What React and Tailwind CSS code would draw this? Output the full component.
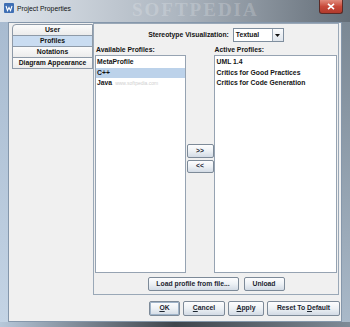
import React from 'react';

const tabs = ['User', 'Profiles', 'Notations', 'Diagram Appearance'];
const available = ['MetaProfile', 'C++', 'Java'];
const active = ['UML 1.4', 'Critics for Good Practices', 'Critics for Code Generation'];

// java "windows" look button
function Btn({ children, className = '' }) {
    return (
        <div
            className={`flex items-center justify-center rounded-[2px] border border-[#7d8a98] bg-linear-to-b from-[#fdfdfe] via-[#edf1f5] to-[#d3dbe5] text-[6.8px] font-bold leading-none text-[#1c2530] ${className}`}
        >
            {children}
        </div>
    );
}

export default function App() {
    return (
        <div className="relative flex h-[327px] w-[350px] flex-col overflow-hidden bg-[#b9cadc] font-['Liberation_Sans',Arial,sans-serif] text-[#141414]">
            {/* title bar */}
            <div className="relative flex h-[22px] items-start bg-linear-to-r from-[#dfe5ec] via-[#aeb7c1] to-[#646e78]">
                <div className="ml-[4px] mt-[3px] flex h-[10px] w-[10px] items-center justify-center rounded-[1px] bg-[#3f6fb4]">
                    <svg width="8" height="8" viewBox="0 0 8 8">
                        <path d="M1 2 L2.5 6.5 L4 3.5 L5.5 6.5 L7 2" fill="none" stroke="#fff" strokeWidth="1.1" />
                    </svg>
                </div>
                <span className="ml-[3px] mt-[4px] text-[6.8px] leading-[9px] text-[#101010]">Project Properties</span>
                <span className="pointer-events-none absolute left-[132px] top-0 font-['Liberation_Serif',serif] text-[19px] font-bold leading-[19px] tracking-[2px] text-white/20">
                    SOFTPEDIA
                </span>
                <div className="ml-auto mr-[7px] flex h-[14px] w-[24px] items-center justify-center rounded-b-[3px] border border-t-0 border-[#5a2a26] bg-linear-to-b from-[#e08a7c] via-[#c8493a] to-[#b13a2c]">
                    <svg width="8" height="7" viewBox="0 0 8 7">
                        <path d="M1 0.8 L7 6.2 M7 0.8 L1 6.2" stroke="#fff" strokeWidth="1.6" />
                    </svg>
                </div>
            </div>

            <div className="flex flex-1">
                <div className="w-[8px] bg-linear-to-b from-[#a8bbd0] to-[#c4d4e5]" />

                {/* client area */}
                <div className="flex w-[334px] flex-col border border-[#8597ab] bg-[#f0f0f0]">
                    <div className="flex h-[272px]">
                        {/* tabs */}
                        <div className="ml-[3px] mt-[2px] flex w-[81px] flex-col">
                            {tabs.map((t, i) => (
                                <div
                                    key={t}
                                    className={`-mt-px flex h-[12px] items-center justify-center border border-[#8e9aa8] text-[6.8px] font-bold leading-none ${
                                        i === 0 ? 'rounded-tl-[4px]' : ''
                                    } ${i === 1 ? 'bg-[#c9dcf1]' : 'bg-linear-to-b from-[#fbfbfb] to-[#ececec]'}`}
                                >
                                    {t}
                                </div>
                            ))}
                        </div>

                        {/* tab panel */}
                        <div className="flex w-[246px] flex-col border border-[#9aa8b7] px-px pb-[3px]">
                            <div className="mt-[4px] flex h-[14px] items-center justify-center gap-[4px]">
                                <span className="text-[6.8px] font-bold">Stereotype Visualization:</span>
                                <div className="flex h-[14px] w-[51px] border border-[#7f8e9e] bg-white">
                                    <span className="flex flex-1 items-center pl-[2px] text-[6.8px] font-bold">Textual</span>
                                    <div className="flex w-[11px] items-center justify-center border-l border-[#9aa6b3] bg-linear-to-b from-[#fafbfc] to-[#dfe5ec]">
                                        <svg width="5" height="3" viewBox="0 0 5 3">
                                            <path d="M0 0 H5 L2.5 3 Z" fill="#111" />
                                        </svg>
                                    </div>
                                </div>
                            </div>

                            <div className="mt-[2px] flex flex-1">
                                <div className="flex w-[91px] flex-col">
                                    <div className="h-[11px] pl-px text-[6.8px] font-bold leading-[11px]">Available Profiles:</div>
                                    <div className="flex-1 border border-[#96a3b2] bg-white pt-px">
                                        {available.map((p, i) => (
                                            <div
                                                key={p}
                                                className={`flex h-[10.5px] items-center gap-[3px] pl-[1px] text-[6.8px] font-bold leading-[10.5px] ${
                                                    i === 1 ? 'bg-[#bcd2ea]' : ''
                                                }`}
                                            >
                                                {p}
                                                {p === 'Java' && (
                                                    <span className="text-[5px] font-normal text-[#cfcfcf]">www.softpedia.com</span>
                                                )}
                                            </div>
                                        ))}
                                    </div>
                                </div>

                                <div className="flex w-[28px] flex-col items-center justify-center gap-[2px] pl-px">
                                    <Btn className="h-[14px] w-[27px]">&gt;&gt;</Btn>
                                    <Btn className="h-[13px] w-[27px]">&lt;&lt;</Btn>
                                </div>

                                <div className="flex w-[124px] flex-col">
                                    <div className="h-[11px] pl-px text-[6.8px] font-bold leading-[11px]">Active Profiles:</div>
                                    <div className="flex-1 border border-[#96a3b2] bg-white pt-px">
                                        {active.map((p) => (
                                            <div key={p} className="h-[10.5px] pl-[2px] text-[6.8px] font-bold leading-[10.5px]">
                                                {p}
                                            </div>
                                        ))}
                                    </div>
                                </div>
                            </div>

                            <div className="mt-[4px] flex justify-center gap-[5px]">
                                <Btn className="h-[14px] w-[91px]">Load profile from file...</Btn>
                                <Btn className="h-[14px] w-[41px]">Unload</Btn>
                            </div>
                        </div>
                    </div>

                    {/* dialog buttons */}
                    <div className="mt-[6px] flex justify-end gap-[3px] pr-px">
                        <Btn className="h-[15px] w-[31px] border-[#4a5562] shadow-[inset_0_0_0_1px_#9fb3c8]">
                            <span className="underline decoration-[0.5px] underline-offset-1">O</span>K
                        </Btn>
                        <Btn className="h-[15px] w-[42px]">
                            <span className="underline decoration-[0.5px] underline-offset-1">C</span>ancel
                        </Btn>
                        <Btn className="h-[15px] w-[36px]">
                            <span className="underline decoration-[0.5px] underline-offset-1">A</span>pply
                        </Btn>
                        <Btn className="h-[15px] w-[73px]">
                            Reset To&nbsp;<span className="underline decoration-[0.5px] underline-offset-1">D</span>efault
                        </Btn>
                    </div>
                </div>

                <div className="w-[8px] bg-linear-to-b from-[#7b8894] to-[#a9b9c9]" />
            </div>

            <div className="h-[5px] bg-linear-to-r from-[#b7c8da] via-[#3f454c] to-[#7f8b97]" />
        </div>
    );
}
